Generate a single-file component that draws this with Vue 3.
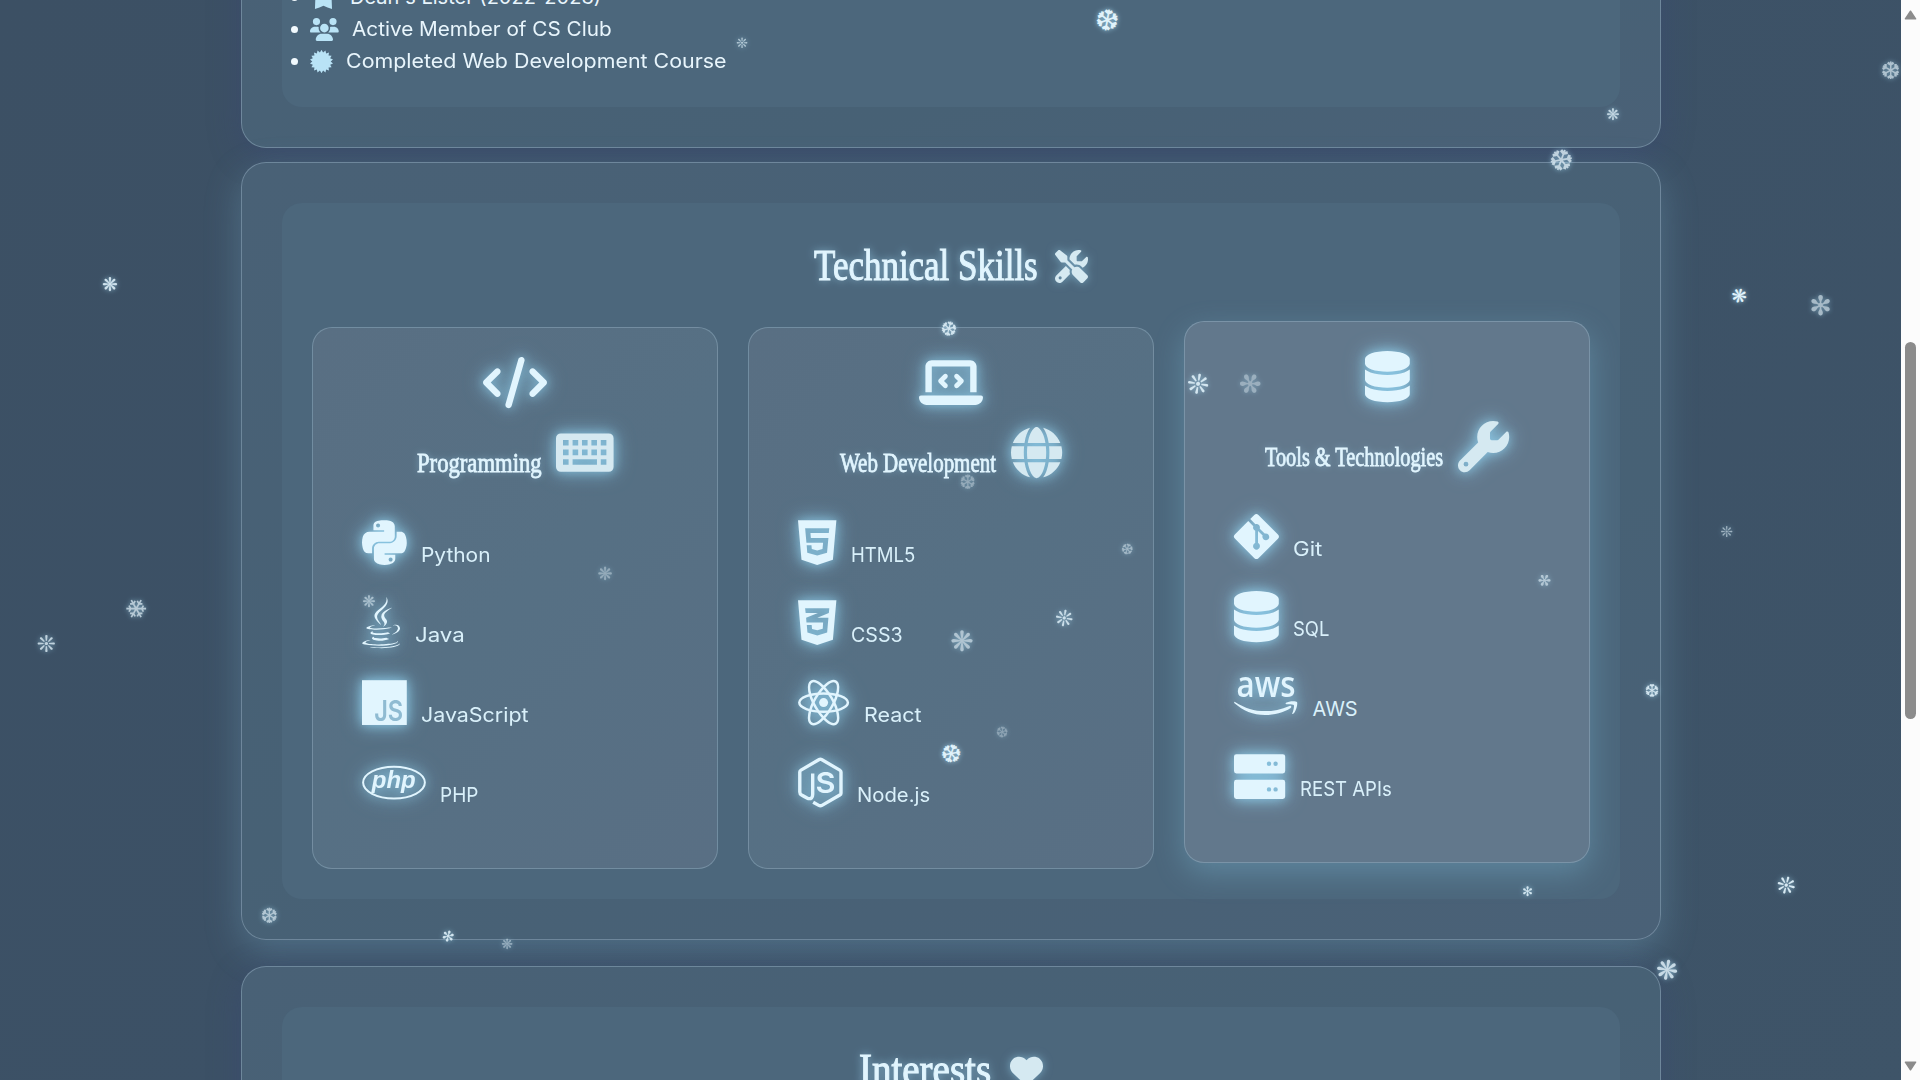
<script setup>
const vFit = {
  mounted(el, { value }) {
    const natural = el.offsetWidth
    el.style.transform = `scaleX(${value / natural})`
    el.style.marginRight = `${value - natural}px`
  },
}

const icons = {
  code: { w: 640, d: 'M392.8 1.2c-17-4.9-34.7 5-39.6 22l-128 448c-4.9 17 5 34.7 22 39.6s34.7-5 39.6-22l128-448c4.9-17-5-34.7-22-39.6zm80.6 120.1c-12.5 12.5-12.5 32.8 0 45.3L562.7 256l-89.4 89.4c-12.5 12.5-12.5 32.8 0 45.3s32.8 12.5 45.3 0l112-112c12.5-12.5 12.5-32.8 0-45.3l-112-112c-12.5-12.5-32.8-12.5-45.3 0zm-306.7 0c-12.5-12.5-32.8-12.5-45.3 0l-112 112c-12.5 12.5-12.5 32.8 0 45.3l112 112c12.5 12.5 32.8 12.5 45.3 0s12.5-32.8 0-45.3L77.3 256l89.4-89.4c12.5-12.5 12.5-32.8 0-45.3z' },
  laptop: { w: 640, d: 'M64 96c0-35.3 28.7-64 64-64H512c35.3 0 64 28.7 64 64V352H512V96H128V352H64V96zM0 403.2C0 392.6 8.6 384 19.2 384H620.8c10.6 0 19.2 8.6 19.2 19.2c0 42.4-34.4 76.8-76.8 76.8H76.8C34.4 480 0 445.6 0 403.2zM281 209l-31 31 31 31c9.4 9.4 9.4 24.6 0 33.9s-24.6 9.4-33.9 0l-48-48c-9.4-9.4-9.4-24.6 0-33.9l48-48c9.4-9.4 24.6-9.4 33.9 0s9.4 24.6 0 33.9zM393 175l48 48c9.4 9.4 9.4 24.6 0 33.9l-48 48c-9.4 9.4-24.6 9.4-33.9 0s-9.4-24.6 0-33.9l31-31-31-31c-9.4-9.4-9.4-24.6 0-33.9s24.6-9.4 33.9 0z' },
  database: { w: 448, d: 'M448 80v48c0 44.2-100.3 80-224 80S0 172.2 0 128V80C0 35.8 100.3 0 224 0S448 35.8 448 80zM393.2 214.7c20.8-7.4 39.9-16.9 54.8-28.6V288c0 44.2-100.3 80-224 80S0 332.2 0 288V186.1c14.9 11.8 34 21.2 54.8 28.6C99.7 230.7 159.5 240 224 240s124.3-9.3 169.2-25.3zM0 346.1c14.9 11.8 34 21.2 54.8 28.6C99.7 390.7 159.5 400 224 400s124.3-9.3 169.2-25.3c20.8-7.4 39.9-16.9 54.8-28.6V432c0 44.2-100.3 80-224 80S0 476.2 0 432V346.1z' },
  keyboard: { w: 576, d: 'M48 64H528a48 48 0 0 1 48 48V400a48 48 0 0 1-48 48H48a48 48 0 0 1-48-48V112a48 48 0 0 1 48-48zM70 130v56h56v-56zM166 130v56h56v-56zM260 130v56h56v-56zM354 130v56h56v-56zM448 130v56h56v-56zM70 226v56h56v-56zM166 226v56h56v-56zM260 226v56h56v-56zM354 226v56h56v-56zM448 226v56h56v-56zM70 322v56h56v-56zM166 322v56h244v-56zM448 322v56h56v-56z' },
  globe: { w: 512, d: 'M352 256c0 22.2-1.2 43.6-3.3 64H163.3c-2.2-20.4-3.3-41.8-3.3-64s1.2-43.6 3.3-64H348.7c2.2 20.4 3.3 41.8 3.3 64zm28.8-64H503.9c5.3 20.5 8.1 41.9 8.1 64s-2.8 43.5-8.1 64H380.8c2.1-20.6 3.2-42 3.2-64s-1.1-43.4-3.2-64zm112.6-32H376.7c-10-63.9-29.8-117.4-55.3-151.6c78.3 20.7 142 77.5 171.9 151.6zm-149.1 0H167.7c6.1-36.4 15.5-68.6 27-94.7c10.5-23.6 22.2-40.7 33.5-51.5C239.4 3.2 248.7 0 256 0s16.6 3.2 27.8 13.8c11.3 10.8 23 27.9 33.5 51.5c11.6 26 20.9 58.2 27 94.7zm-209 0H18.6C48.6 85.9 112.2 29.1 190.6 8.4C165.1 42.6 145.3 96.1 135.3 160zM8.1 192H131.2c-2.1 20.6-3.2 42-3.2 64s1.1 43.4 3.2 64H8.1C2.8 299.5 0 278.1 0 256s2.8-43.5 8.1-64zM194.7 446.6c-11.6-26-20.9-58.2-27-94.6H344.3c-6.1 36.4-15.5 68.6-27 94.6c-10.5 23.6-22.2 40.7-33.5 51.5C272.6 508.8 263.3 512 256 512s-16.6-3.2-27.8-13.8c-11.3-10.8-23-27.9-33.5-51.5zM135.3 352c10 63.9 29.8 117.4 55.3 151.6C112.2 482.9 48.6 426.1 18.6 352H135.3zm358.1 0c-30 74.1-93.6 130.9-171.9 151.6c25.5-34.2 45.2-87.7 55.3-151.6H493.4z' },
  wrench: { w: 512, d: 'M352 320c88.4 0 160-71.6 160-160c0-15.3-2.2-30.1-6.2-44.2c-3.1-10.8-16.4-13.2-24.3-5.3l-76.8 76.8c-3 3-7.1 4.7-11.3 4.7H336c-8.8 0-16-7.2-16-16V118.6c0-4.2 1.7-8.3 4.7-11.3l76.8-76.8c7.9-7.9 5.4-21.2-5.3-24.3C382.1 2.2 367.3 0 352 0C263.6 0 192 71.6 192 160c0 19.1 3.4 37.5 9.5 54.5L19.9 396.1C7.2 408.8 0 426.1 0 444.1C0 481.6 30.4 512 67.9 512c18 0 35.3-7.2 48-19.9L297.5 310.5c17 6.2 35.4 9.5 54.5 9.5zM80 408a24 24 0 1 1 0 48 24 24 0 1 1 0-48z' },
  tools: { w: 512, d: 'M78.6 5C69.1-2.4 55.6-1.5 47 7L7 47c-8.5 8.5-9.4 22-2.1 31.6l80 104c4.5 5.9 11.6 9.4 19 9.4h54.1l109 109c-14.7 29-10 65.4 14.3 89.6l112 112c12.5 12.5 32.8 12.5 45.3 0l64-64c12.5-12.5 12.5-32.8 0-45.3l-112-112c-24.2-24.2-60.6-29-89.6-14.3l-109-109V104c0-7.5-3.5-14.5-9.4-19L78.6 5zM19.9 396.1C7.2 408.8 0 426.1 0 444.1C0 481.6 30.4 512 67.9 512c18 0 35.3-7.2 48-19.9L233.7 374.3c-7.8-20.9-9-43.6-3.6-65.1l-61.7-61.7L19.9 396.1zM512 144c0-10.5-1.1-20.7-3.2-30.5c-2.4-11.2-16.1-14.1-24.2-6l-63.9 63.9c-3 3-7.1 4.7-11.3 4.7H352c-8.8 0-16-7.2-16-16V102.6c0-4.2 1.7-8.3 4.7-11.3l63.9-63.9c8.1-8.1 5.2-21.8-6-24.2C388.7 1.1 378.5 0 368 0C288.5 0 224 64.5 224 144l0 .8 85.3 85.3c36-9.1 75.8 .5 104 28.7L429 274.5c49-23 83-72.8 83-130.5zM56 432a24 24 0 1 1 48 0 24 24 0 1 1 -48 0z' },
  heart: { w: 512, d: 'M47.6 300.4L228.3 469.1c7.5 7 17.4 10.9 27.7 10.9s20.2-3.9 27.7-10.9L464.4 300.4c30.4-28.3 47.6-68 47.6-109.5v-5.8c0-69.9-50.5-129.5-119.4-141C347 36.5 300.6 51.4 268 84L256 96 244 84c-32.6-32.6-79-47.5-124.6-39.9C50.5 55.6 0 115.2 0 185.1v5.8c0 41.5 17.2 81.2 47.6 109.5z' },
  python: { w: 448, d: 'M439.8 200.5c-7.7-30.9-22.3-54.2-53.4-54.2h-40.1v47.4c0 36.8-31.2 67.8-66.8 67.8H172.7c-29.2 0-53.4 25-53.4 54.3v101.8c0 29 25.2 46 53.4 54.3 33.8 9.9 66.3 11.7 106.8 0 26.9-7.8 53.4-23.5 53.4-54.3v-40.7H226.2v-13.6h160.2c31.1 0 42.6-21.7 53.4-54.2 11.2-33.5 10.7-65.7 0-108.6zM286.2 404c11.1 0 20.1 9.1 20.1 20.3 0 11.3-9 20.4-20.1 20.4-11 0-20.1-9.2-20.1-20.4.1-11.3 9.1-20.3 20.1-20.3zM167.8 248.1h106.8c29.7 0 53.4-24.5 53.4-54.3V91.9c0-29-24.4-50.7-53.4-55.6-35.8-5.9-74.7-5.6-106.8.1-45.2 8-53.4 24.7-53.4 55.6v40.7h106.9v13.6h-147c-31.1 0-58.3 18.7-66.8 54.2-9.8 40.7-10.2 66.1 0 108.6 7.6 31.6 25.7 54.2 56.8 54.2H101v-48.8c0-35.3 30.5-66.4 66.8-66.4zm-6.7-142.6c-11.1 0-20.1-9.1-20.1-20.3.1-11.3 9-20.4 20.1-20.4 11 0 20.1 9.2 20.1 20.4s-9 20.3-20.1 20.3z' },
  java: { w: 384, d: 'M277.74 312.9c9.8-6.7 23.4-12.5 23.4-12.5s-38.7 7-77.2 10.2c-47.1 3.9-97.7 4.7-123.1 1.3-60.1-8 33-30.1 33-30.1s-36.1-2.4-80.6 19c-52.5 25.4 130 37 224.5 12.1zm-85.4-32.1c-19-42.7-83.1-80.2 0-145.8C296 53.2 242.84 0 242.84 0c21.5 84.5-75.6 110.1-110.7 162.6-23.9 35.9 11.7 74.4 60.2 118.2zm114.6-176.2c.1 0-175.2 43.8-91.5 140.2 24.7 28.4-6.5 54-6.5 54s62.7-32.4 33.9-72.9c-26.9-37.8-47.5-56.6 64.1-121.3zm-6.1 270.5a12.19 12.19 0 0 1-2 2.6c128.3-33.7 81.1-118.9 19.8-97.3a17.33 17.33 0 0 0-8.2 6.3 70.45 70.45 0 0 1 11-3c31-6.5 75.5 41.5-20.6 91.4zM348 437.4s14.5 11.9-15.9 21.2c-57.9 17.5-240.8 22.8-291.6.7-18.3-7.9 16-19 26.8-21.3 11.2-2.4 17.7-2 17.7-2-20.3-14.3-131.3 28.1-56.4 40.2C232.84 509.4 401 461.3 348 437.4zM124.44 396c-78.7 22 47.9 67.4 148.1 24.5a185.89 185.89 0 0 1-28.2-13.8c-44.7 8.5-65.4 9.1-106 4.5-33.5-3.8-13.9-15.2-13.9-15.2zm179.8 97.2c-78.7 14.8-175.8 13.1-233.3 3.6 0-.1 11.8 9.7 72.4 13.6 92.2 5.9 233.8-3.3 237.1-46.9 0 0-6.4 16.5-76.2 29.7zM260.64 353c-59.2 11.4-93.5 11.1-136.8 6.6-33.5-3.5-11.6-19.7-11.6-19.7-86.8 28.8 48.2 61.4 169.5 25.9a60.37 60.37 0 0 1-21.1-12.8z' },
  html5: { w: 384, d: 'M0 32l34.9 395.8L191.5 480l157.6-52.2L384 32H0zm308.2 127.9H124.4l4.1 49.4h175.6l-13.6 148.4-97.9 27v.3h-1.1l-98.7-27.3-6-75.8h47.7L138 320l53.5 14.5 53.7-14.5 6-62.2H84.3L71.5 112.2h241.1l-4.4 47.7z' },
  css3: { w: 384, d: 'M0 32l34.9 395.8L192 480l157.1-52.2L384 32H0zm313.1 80l-4.8 47.3L193 208.6l-.3.1h111.5l-12.8 146.6-98.2 28.7-98.8-29.2-6.4-73.9h48.9l3.2 38.3 52.6 13.3 54.7-15.4 3.7-61.6-166.3-.5v-.1l-.2.1-3.6-46.3L193.1 162l6.5-2.7H76.7L70.9 112h242.2z' },
  git: { w: 448, d: 'M439.55 236.05L244 40.45a28.87 28.87 0 0 0-40.81 0l-40.66 40.63 51.52 51.52c27.06-9.14 52.68 16.77 43.39 43.68l49.66 49.66c34.23-11.8 61.18 31 35.47 56.69-26.49 26.49-70.21-2.87-56-37.34L240.22 199v121.85c25.3 12.54 22.26 41.85 9.08 55a34.34 34.34 0 0 1-48.55 0c-17.57-17.6-11.07-46.91 11.25-56v-123c-20.8-8.51-24.6-30.74-18.64-45L142.57 101 8.45 235.14a28.86 28.86 0 0 0 0 40.81l195.61 195.6a28.86 28.86 0 0 0 40.8 0l194.69-194.69a28.86 28.86 0 0 0 0-40.81z' },
  server: { w: 512, d: 'M24 32H488a24 24 0 0 1 24 24V200a24 24 0 0 1-24 24H24a24 24 0 0 1-24-24V56a24 24 0 0 1 24-24zM24 288H488a24 24 0 0 1 24 24V456a24 24 0 0 1-24 24H24a24 24 0 0 1-24-24V312a24 24 0 0 1 24-24zM328 128a22 22 0 1 0 44 0 22 22 0 1 0-44 0zM394 128a22 22 0 1 0 44 0 22 22 0 1 0-44 0zM328 384a22 22 0 1 0 44 0 22 22 0 1 0-44 0zM394 384a22 22 0 1 0 44 0 22 22 0 1 0-44 0z' },
  users: { w: 640, d: 'M144 0a80 80 0 1 1 0 160A80 80 0 1 1 144 0zM512 0a80 80 0 1 1 0 160A80 80 0 1 1 512 0zM0 298.7C0 239.8 47.8 192 106.7 192h42.7c15.9 0 31 3.5 44.6 9.7c-1.3 7.2-1.9 14.7-1.9 22.3c0 38.2 16.8 72.5 43.3 96H21.3C9.6 320 0 310.4 0 298.7zM405.3 320c26.6-23.5 42.6-57.8 42.6-96c0-7.6-.7-15-1.9-22.3c13.6-6.3 28.7-9.7 44.6-9.7h42.7C592.2 192 640 239.8 640 298.7c0 11.8-9.6 21.3-21.3 21.3H405.3zM224 224a96 96 0 1 0 192 0 96 96 0 1 0 -192 0zM128 485.3C128 411.7 187.7 352 261.3 352H378.7C452.3 352 512 411.7 512 485.3c0 14.7-11.9 26.7-26.7 26.7H154.7c-14.7 0-26.7-11.9-26.7-26.7z' },
  medal: { w: 600, d: 'M300 0a160 160 0 1 1 0 320A160 160 0 1 1 300 0zM120 250H480L490 512 390 480 300 440 210 480 110 512z' },
  js: { w: 448 },
  php: { w: 640 },
  react: { w: 512 },
  node: { w: 448 },
  aws: { w: 640 },
}

// Eighteen-toothed seal outline
const seal = Array.from({ length: 36 }, (_, i) => {
  const r = i % 2 ? 205 : 260
  const a = (i * Math.PI) / 18
  return `${(256 + r * Math.sin(a)).toFixed(1)} ${(256 - r * Math.cos(a)).toFixed(1)}`
})
icons.seal = { w: 512, d: `M${seal.join('L')}z` }

const honors = [
  { icon: 'medal', text: "Dean's Lister (2022-2023)", w: 251 },
  { icon: 'users', text: 'Active Member of CS Club', w: 260 },
  { icon: 'seal', text: 'Completed Web Development Course', w: 381 },
]

const groups = [
  {
    title: 'Programming', w: 125, icon: 'code', side: 'keyboard',
    items: [
      { icon: 'python', text: 'Python', w: 69 },
      { icon: 'java', text: 'Java', w: 50 },
      { icon: 'js', text: 'JavaScript', w: 107 },
      { icon: 'php', text: 'PHP', w: 38 },
    ],
  },
  {
    title: 'Web Development', w: 156, icon: 'laptop', side: 'globe',
    items: [
      { icon: 'html5', text: 'HTML5', w: 64 },
      { icon: 'css3', text: 'CSS3', w: 52 },
      { icon: 'react', text: 'React', w: 58 },
      { icon: 'node', text: 'Node.js', w: 73 },
    ],
  },
  {
    title: 'Tools & Technologies', w: 178, icon: 'database', side: 'wrench', hot: true,
    items: [
      { icon: 'git', text: 'Git', w: 29 },
      { icon: 'database', text: 'SQL', w: 36 },
      { icon: 'aws', text: 'AWS', w: 45 },
      { icon: 'server', text: 'REST APIs', w: 92 },
    ],
  },
]

// x, y, glyph, size, opacity, rotation
const flakes = [
  [1107, 20, '❆', 29, 1, 10], [742, 43, '❊', 14, 0.7, 0], [1890.5, 70.5, '❆', 24, 0.7, 0],
  [1613, 114.5, '❋', 16, 0.8, 0], [1561, 160.5, '❆', 29, 0.8, 20], [110, 283, '❋', 19, 0.9, 0],
  [1739, 295, '❋', 19, 1, 15], [1820.5, 304, '✻', 27, 0.65, 0], [949, 328, '❆', 20, 0.9, 15],
  [1197.5, 383, '❊', 27, 0.9, 10], [1250, 383, '✻', 27, 0.45, 30], [968, 481, '❆', 20, 0.45, 0],
  [1127, 549.5, '❆', 15, 0.55, 20], [605, 573, '❋', 18, 0.45, 0], [369, 601.5, '❋', 16, 0.6, 0],
  [1064, 618, '❊', 22, 0.85, 10], [962, 641, '❋', 28, 0.65, 0], [950.5, 753, '❆', 25, 1, 20],
  [1001.5, 733, '❆', 15, 0.4, 10], [1544, 580.5, '✻', 16, 0.65, 30], [136.4, 607.7, '❄', 27, 0.75, 30],
  [46.4, 643, '❊', 23, 0.8, 0], [269.6, 915.5, '❆', 21, 0.7, 0], [447.5, 936.5, '✻', 15, 0.9, 15],
  [507, 943.5, '❋', 14, 0.5, 0], [1527.7, 890.5, '✻', 13, 0.9, 0], [1652, 690, '❆', 18, 0.9, 0],
  [1786, 885, '❊', 23, 0.95, 15], [1667, 969, '❋', 27, 0.85, 10], [1726.5, 532, '❊', 15, 0.6, 0],
].map(([x, y, glyph, size, opacity, turn]) => ({
  glyph,
  style: {
    left: `${x}px`,
    top: `${y + size * 0.03}px`,
    fontSize: `${size}px`,
    opacity,
    transform: `translate(-50%, -50%) rotate(${turn}deg)`,
  },
}))
</script>

<template>
  <div class="page">
    <main class="column">
      <section class="panel first">
        <div class="inner end">
          <ul class="honors">
            <li v-for="h in honors" :key="h.text">
              <i class="bullet"></i>
              <svg class="small" :viewBox="`0 0 ${icons[h.icon].w} 512`"><path :d="icons[h.icon].d" /></svg>
              <span v-fit="h.w" class="fit">{{ h.text }}</span>
            </li>
          </ul>
        </div>
      </section>

      <section class="panel lifted">
        <div class="inner">
          <h2>
            <span v-fit="224" class="fit">Technical Skills</span>
            <svg viewBox="0 0 512 512"><path :d="icons.tools.d" /></svg>
          </h2>
          <div class="grid">
            <article v-for="g in groups" :key="g.title" class="skill" :class="{ hot: g.hot }">
              <svg class="glyph lead" :viewBox="`0 0 ${icons[g.icon].w} 512`"><path :d="icons[g.icon].d" /></svg>
              <h3>
                <span v-fit="g.w" class="fit">{{ g.title }}</span>
                <svg class="glyph pale" :viewBox="`0 0 ${icons[g.side].w} 512`">
                  <path :d="icons[g.side].d" fill-rule="evenodd" />
                </svg>
              </h3>
              <ul>
                <li v-for="s in g.items" :key="s.text">
                  <svg class="glyph" :viewBox="`0 0 ${icons[s.icon].w} 512`">
                    <template v-if="s.icon === 'js'">
                      <rect y="32" width="448" height="448" />
                      <text class="cut" x="122" y="440" font-size="282" textLength="290" lengthAdjust="spacingAndGlyphs">JS</text>
                    </template>
                    <template v-else-if="s.icon === 'php'">
                      <ellipse class="line" cx="320" cy="256" rx="309" ry="159" stroke-width="20" />
                      <text class="slant" x="98" y="306" font-size="244" textLength="440" lengthAdjust="spacingAndGlyphs">php</text>
                    </template>
                    <template v-else-if="s.icon === 'react'">
                      <g class="line" stroke-width="25">
                        <ellipse cx="256" cy="256" rx="243" ry="92" />
                        <ellipse cx="256" cy="256" rx="243" ry="92" transform="rotate(60 256 256)" />
                        <ellipse cx="256" cy="256" rx="243" ry="92" transform="rotate(120 256 256)" />
                      </g>
                      <circle cx="256" cy="256" r="45" />
                    </template>
                    <template v-else-if="s.icon === 'node'">
                      <path
                        class="line" stroke-width="34"
                        d="M147 165V372Q147 425 100 415Q90 412 36 381Q18 370 18 350V150Q18 138 30 131L212 26Q224 20 236 26L418 131Q430 138 430 150V362Q430 374 418 381L240 484Q224 493 208 484L152 452"
                      />
                      <text class="wide" x="176" y="362" font-size="282" textLength="200" lengthAdjust="spacingAndGlyphs">S</text>
                    </template>
                    <template v-else-if="s.icon === 'aws'">
                      <text class="aws" x="26" y="256" font-size="366" textLength="590" lengthAdjust="spacingAndGlyphs">aws</text>
                      <path d="M10 309c100 62 195 92 300 92 80 0 165-17 245-52 15-6 26 10 12 21-70 48-165 70-257 70C190 440 90 395 5 322c-7-7-2-18 5-13zM520 318c30-20 100-20 110-8 9 12-5 88-38 118-7 5-12 2-9-5 10-24 22-72 15-82s-50-10-73-8c-10 1-12-9-5-15z" />
                    </template>
                    <path v-else :d="icons[s.icon].d" fill-rule="evenodd" />
                  </svg>
                  <span v-fit="s.w" class="fit">{{ s.text }}</span>
                </li>
              </ul>
            </article>
          </div>
        </div>
      </section>

      <section class="panel last">
        <div class="inner">
          <h2>
            <span v-fit="132" class="fit">Interests</span>
            <svg viewBox="0 0 512 512"><path :d="icons.heart.d" /></svg>
          </h2>
        </div>
      </section>
    </main>

    <div class="scrollbar">
      <svg width="13" height="10" viewBox="0 0 13 10"><path d="M6.5 1.2 11.6 8.8H1.4Z" /></svg>
      <i class="thumb"></i>
      <svg width="13" height="10" viewBox="0 0 13 10"><path d="M6.5 8.8 11.6 1.2H1.4Z" /></svg>
    </div>

    <span v-for="(f, i) in flakes" :key="i" class="flake" :style="f.style">{{ f.glyph }}</span>
  </div>
</template>

<style>
body {
  background: #3d5267;
}
</style>

<style scoped>
* {
  box-sizing: border-box;
}
.page {
  position: relative;
  display: flex;
  justify-content: space-between;
  height: 1080px;
  overflow: hidden;
  background: linear-gradient(135deg, #3c5064 0%, #3c5166 45%, #3e5468 100%);
  color: #e8f5fc;
  font-family: Inter, "Open Sans", sans-serif;
  font-size: 20px;
}
.column {
  display: flex;
  flex: none;
  flex-direction: column;
  width: 1420px;
  margin: -60px 0 0 241px;
}
.panel {
  display: flex;
  flex: none;
  padding: 40px;
  border: 1px solid rgba(200, 225, 245, 0.3);
  border-radius: 25px;
  background: linear-gradient(165deg, #496176, #476175 60%, #4a6177);
  box-shadow: 0 8px 32px rgba(58, 70, 120, 0.4);
}
.first {
  height: 208px;
}
.lifted {
  z-index: 1;
  height: 778px;
  margin-top: 14px;
  box-shadow: 0 12px 36px rgba(135, 195, 225, 0.27);
}
.last {
  z-index: 2;
  height: 300px;
  margin-top: 26px;
}
.inner {
  display: flex;
  flex: 1;
  flex-direction: column;
  padding: 30px;
  border-radius: 20px;
  background: #4c677c;
}
.end {
  justify-content: flex-end;
}
ul {
  margin: 0;
  padding: 0;
  list-style: none;
}
.fit {
  flex: none;
  white-space: nowrap;
  transform-origin: left;
}
.honors {
  margin-left: -21px;
}
.honors li {
  display: flex;
  align-items: center;
  height: 32px;
  line-height: 32px;
}
.bullet {
  flex: none;
  width: 7px;
  height: 7px;
  margin-right: 12px;
  border-radius: 50%;
  background: #f2fafe;
}
.small {
  flex: none;
  height: 23px;
  margin-right: 13px;
  fill: #b9e3f6;
}
h2 {
  display: flex;
  justify-content: center;
  gap: 18px;
  height: 94px;
  margin: 0;
  padding-top: 8px;
  color: #e1f5fe;
  font: 44px/50px "Liberation Serif", serif;
  -webkit-text-stroke: 1.1px #e1f5fe;
  text-shadow: 0 0 10px rgba(160, 215, 245, 0.85);
}
h2 svg {
  width: 33px;
  height: 33px;
  margin-top: 9px;
  fill: #d5e9f1;
  filter: drop-shadow(0 0 5px rgba(150, 210, 240, 0.6));
}
.grid {
  display: flex;
  gap: 30px;
}
.skill {
  flex: 1;
  height: 541.5px;
  padding: 29px 30px;
  border: 1px solid rgba(190, 220, 240, 0.27);
  border-radius: 20px;
  background: linear-gradient(135deg, #596f83, #567084 50%, #596f84);
}
.hot {
  position: relative;
  top: -6px;
  background: #62788c;
  box-shadow: 0 10px 30px rgba(135, 206, 235, 0.3);
}
.glyph {
  display: block;
  flex: none;
  height: 51.2px;
  overflow: visible;
  fill: #e1f5fe;
  filter: drop-shadow(0 0 5px rgba(145, 212, 242, 0.55)) drop-shadow(0 0 9px rgba(145, 212, 242, 0.75));
}
.lead {
  margin: 0 auto;
}
.pale {
  fill: #d5e9f1;
}
h3 {
  display: flex;
  justify-content: center;
  gap: 14.5px;
  height: 51px;
  margin: 19px 0 39px;
  color: #e1f5fe;
  font: 27px/30px "Liberation Serif", serif;
  -webkit-text-stroke: 0.8px #e1f5fe;
  text-shadow: 0 0 8px rgba(160, 215, 245, 0.6);
}
h3 .fit {
  margin-top: 21px;
}
.skill ul {
  padding-left: 19px;
}
.skill li {
  display: flex;
  height: 80px;
  color: #d9f0fa;
  line-height: 24px;
}
.skill li .fit {
  margin: 26px 0 0 14.5px;
}
.line {
  fill: none;
  stroke: #e1f5fe;
}
.cut {
  fill: #8fbbd2;
  font-family: Inter, sans-serif;
  font-weight: 600;
}
.slant {
  font-family: "Liberation Sans", sans-serif;
  font-style: italic;
  font-weight: 700;
}
.wide {
  font-family: Inter, sans-serif;
  font-weight: 600;
}
.aws {
  font-family: "Open Sans", sans-serif;
  font-weight: 600;
}
.scrollbar {
  z-index: 4;
  display: flex;
  flex: none;
  flex-direction: column;
  align-items: center;
  justify-content: space-between;
  width: 19px;
  padding: 10px 0 9px;
  background: #fcfcfc;
}
.scrollbar svg {
  fill: #8b8b8b;
  stroke: #8b8b8b;
  stroke-linejoin: round;
  stroke-width: 1.5;
}
.thumb {
  width: 11px;
  height: 377px;
  margin-bottom: 20px;
  border-radius: 6px;
  background: #8b8b8b;
}
.flake {
  position: absolute;
  z-index: 3;
  color: #e0f2fb;
  font-family: "DejaVu Sans", sans-serif;
  line-height: 1;
  text-shadow: 0 0 5px rgba(170, 225, 250, 0.8);
}
</style>
